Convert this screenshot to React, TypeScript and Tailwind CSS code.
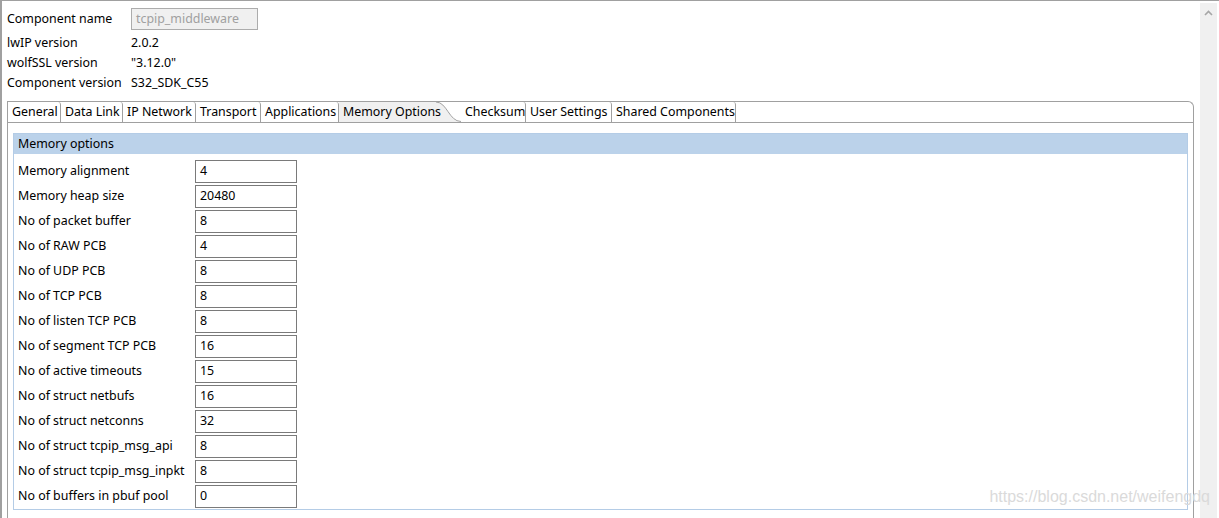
import React from 'react';

const info = [
  { label: 'lwIP version', value: '2.0.2' },
  { label: 'wolfSSL version', value: '"3.12.0"' },
  { label: 'Component version', value: 'S32_SDK_C55' },
];

const tabs = [
  { name: 'General', w: 'w-[53px]' },
  { name: 'Data Link', w: 'w-[62px]' },
  { name: 'IP Network', w: 'w-[73px]' },
  { name: 'Transport', w: 'w-[65px]' },
  { name: 'Applications', w: 'w-[78px]' },
  { name: 'Memory Options', w: 'w-[122px]', active: true },
  { name: 'Checksum', w: 'w-[65px]' },
  { name: 'User Settings', w: 'w-[86px]' },
  { name: 'Shared Components', w: 'w-[124px]' },
];

const options = [
  ['Memory alignment', '4'],
  ['Memory heap size', '20480'],
  ['No of packet buffer', '8'],
  ['No of RAW PCB', '4'],
  ['No of UDP PCB', '8'],
  ['No of TCP PCB', '8'],
  ['No of listen TCP PCB', '8'],
  ['No of segment TCP PCB', '16'],
  ['No of active timeouts', '15'],
  ['No of struct netbufs', '16'],
  ['No of struct netconns', '32'],
  ['No of struct tcpip_msg_api', '8'],
  ['No of struct tcpip_msg_inpkt', '8'],
  ['No of buffers in pbuf pool', '0'],
];

export default function App() {
  return (
    <div
      className="relative flex h-[518px] w-[1219px] overflow-hidden border-t border-l-2 border-[#a0a0a0] bg-white text-[12.4px] text-black"
      style={{ fontFamily: '"Noto Sans", "Open Sans", sans-serif' }}
    >
      <div className="flex flex-1 flex-col">
        {/* component header */}
        <div className="pl-[5px] pt-[7px]">
          <div className="flex h-[22px] items-center">
            <span className="w-[124px]">Component name</span>
            <div className="flex h-[22px] w-[127px] items-center border border-[#acacac] bg-[#f0f0f0] pl-[4px] text-[#a0a0a0]">
              tcpip_middleware
            </div>
          </div>
          <div className="mt-[3px]">
            {info.map((r) => (
              <div key={r.label} className="flex h-[20px] items-center">
                <span className="w-[124px] shrink-0">{r.label}</span>
                <span>{r.value}</span>
              </div>
            ))}
          </div>
        </div>

        {/* tab folder */}
        <div className="ml-[5px] mr-[6px] mt-[8px] flex flex-1 flex-col rounded-tr-[6px] border-t border-l border-r border-[#a0a0a0]">
          <div className="flex h-[21px] border-b border-[#a0a0a0]">
            {tabs.map((t) =>
              t.active ? (
                <div key={t.name} className={`relative flex shrink-0 items-center whitespace-nowrap ${t.w}`}>
                  <svg className="absolute left-0 top-0" width="122" height="20" viewBox="0 0 122 20">
                    <path d="M0 0 L97 0 C108 0 110 20 122 20 L0 20 Z" fill="#f0f0f0" />
                    <path d="M97 0 C108 0 110 19.5 122 19.5" fill="none" stroke="#a0a0a0" strokeWidth="1" />
                  </svg>
                  <span className="relative pl-[4px]">{t.name}</span>
                </div>
              ) : (
                <div
                  key={t.name}
                  className={`flex shrink-0 items-center overflow-hidden whitespace-nowrap rounded-tr-[3px] border-r border-[#a0a0a0] pl-[4px] ${t.w}`}
                >
                  {t.name}
                </div>
              ),
            )}
          </div>

          <div className="flex-1 px-[5px] pt-[10px]">
            <div className="border border-[#b4cce6]">
              <div className="flex h-[20px] items-center bg-[#bbd2ea] pl-[4px]">Memory options</div>
              <div className="pt-[5px]">
                {options.map(([label, value]) => (
                  <div key={label} className="flex h-[25px] items-center pl-[4px]">
                    <span className="w-[177px] shrink-0 whitespace-nowrap">{label}</span>
                    <div className="flex h-[23px] w-[102px] items-center border border-[#7a7a7a] pl-[4px]">
                      {value}
                    </div>
                  </div>
                ))}
              </div>
            </div>
          </div>
        </div>
      </div>

      {/* scrollbar */}
      <div className="mt-[2px] flex w-[17px] justify-center bg-[#f0f0f0] pt-[7px]">
        <svg width="9" height="6" viewBox="0 0 9 6">
          <path d="M1 5 L4.5 1.5 L8 5" fill="none" stroke="#a6a6a6" strokeWidth="1.6" />
        </svg>
      </div>
      <div className="w-[2px]" />

      <div
        className="pointer-events-none absolute bottom-[9px] right-[9px] text-[16px] text-[#dadada]"
        style={{ fontFamily: '"Liberation Sans", Arial, sans-serif' }}
      >
        https://blog.csdn.net/weifengdq
      </div>
    </div>
  );
}
